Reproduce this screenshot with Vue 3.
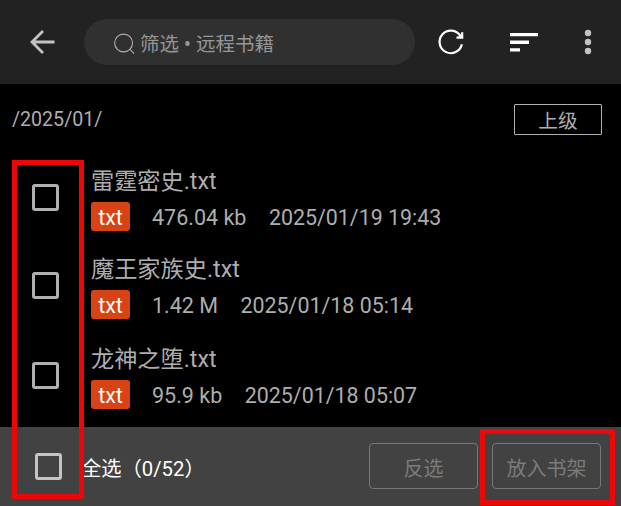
<script setup>
const books = [
  { name: '雷霆密史.txt', size: '476.04 kb', date: '2025/01/19 19:43' },
  { name: '魔王家族史.txt', size: '1.42 M', date: '2025/01/18 05:14' },
  { name: '龙神之堕.txt', size: '95.9 kb', date: '2025/01/18 05:07' },
]
</script>

<template>
  <div class="screen">
    <header class="toolbar">
      <svg class="back" width="26" height="26" viewBox="0 0 26 26">
        <path d="M25.5 13H3M14 2L3 13L14 24" fill="none" stroke="#c3c3c3" stroke-width="2.8" />
      </svg>
      <div class="search">
        <svg width="22" height="22" viewBox="0 0 22 22">
          <g fill="none" stroke="#b2b2b2" stroke-width="1.1">
            <circle cx="9.6" cy="10" r="8.9" />
            <path d="M15.8 16L20 20.6" />
          </g>
        </svg>
        <span>筛选 <b>•</b> 远程书籍</span>
      </div>
      <svg class="refresh" width="28" height="28" viewBox="0 0 28 28">
        <path d="M24.9 16.3A11.3 11.3 0 1 1 23.4 7.8" fill="none" stroke="#fff" stroke-width="2.2" />
        <path d="M25.2 4.2V9.7H19.5" fill="none" stroke="#fff" stroke-width="2.2" />
        <path d="M25 5V10H20Z" fill="#fff" />
      </svg>
      <svg class="sort" width="28" height="19" viewBox="0 0 28 19">
        <path d="M0 0H28V3.3H0ZM0 7.6H19V10.9H0ZM0 15.2H10V18.5H0Z" fill="#fff" />
      </svg>
      <svg class="more" width="8" height="26" viewBox="0 0 8 26">
        <g fill="#c3c3c3">
          <circle cx="4" cy="4" r="3.2" />
          <circle cx="4" cy="13" r="3.2" />
          <circle cx="4" cy="22" r="3.2" />
        </g>
      </svg>
    </header>

    <section class="location">
      <span class="path">/2025/01/</span>
      <button class="up">上级</button>
    </section>

    <main class="books">
      <article v-for="book in books" :key="book.name" class="book">
        <span class="check"></span>
        <div class="info">
          <h2>{{ book.name }}</h2>
          <div class="meta">
            <span class="tag">txt</span>
            <span class="size">{{ book.size }}</span>
            <span class="date">{{ book.date }}</span>
          </div>
        </div>
      </article>
    </main>

    <footer class="actions">
      <span class="check"></span>
      <span class="all">全选（0/52）</span>
      <button class="invert">反选</button>
      <button class="add">放入书架</button>
    </footer>

    <div class="mark mark-checks"></div>
    <div class="mark mark-add"></div>
  </div>
</template>

<style>
body {
  margin: 0;
  background: #000;
}
</style>

<style scoped>
.screen {
  position: relative;
  display: grid;
  grid-template-rows: 84px 70px 273px 79px;
  width: 621px;
  height: 506px;
  overflow: hidden;
  background: #000;
  color: #aeaeae;
  font-family: Roboto, "Noto Sans CJK SC", sans-serif;
  white-space: nowrap;
}
.screen * {
  box-sizing: border-box;
}
svg {
  display: block;
  flex: none;
}
button {
  padding: 0;
  background: transparent;
  font-family: inherit;
}
.toolbar {
  display: flex;
  align-items: center;
  padding-left: 28.5px;
  background: #222;
}
.search {
  display: flex;
  align-items: center;
  width: 331px;
  height: 46px;
  margin-left: 29.5px;
  padding-left: 30px;
  gap: 4px;
  border-radius: 23px;
  background: #303030;
  color: #969696;
  font-size: 19.5px;
  line-height: 28px;
}
.search span {
  padding-top: 5px;
}
.search b {
  font-family: "Noto Sans", sans-serif;
  font-weight: 400;
}
.search svg {
  margin-top: 3px;
}
.refresh {
  margin-left: 22px;
}
.sort {
  margin-left: 45px;
}
.more {
  margin-left: 46px;
}
.location {
  display: flex;
  align-items: center;
  justify-content: space-between;
  padding: 0 19px 0 12px;
}
.path {
  font-size: 19.6px;
}
.up {
  width: 88px;
  height: 31px;
  padding-top: 2px;
  border: 1px solid #b0b0b0;
  border-radius: 1px;
  color: #aeaeae;
  font-size: 19.7px;
  line-height: 29px;
}
.books {
  display: grid;
  grid-template-rows: 88px 90px 95px;
}
.book {
  display: flex;
}
.check {
  flex: none;
  width: 27px;
  height: 27px;
  border: 3px solid #b0b0b0;
  border-radius: 3px;
}
.book .check {
  margin: 30px 0 0 32px;
}
.info {
  margin-left: 32px;
}
h2 {
  height: 34px;
  margin: 10px 0 4px;
  font-size: 23.2px;
  font-weight: 400;
  line-height: 34px;
}
.meta {
  display: flex;
  align-items: center;
  height: 29px;
  font-size: 21.5px;
  line-height: 31px;
}
.tag {
  width: 39px;
  height: 29px;
  border-radius: 3px;
  background: #d84315;
  color: #fff;
  text-align: center;
}
.size {
  margin: 0 22.5px 0 22px;
}
.date {
  font-size: 21.4px;
}
.size,
.date {
  padding-top: 1px;
}
.actions {
  display: flex;
  align-items: center;
  padding-left: 34.5px;
  background: #424242;
}
.actions .check {
  border-color: #c4c4c4;
}
.all {
  width: 288px;
  margin-left: 19.5px;
  color: #fff;
  font-size: 20.3px;
}
.actions button {
  height: 46px;
  margin-bottom: 1px;
  border: 1px solid #777;
  border-radius: 4px;
  color: #7b7b7b;
  font-size: 20px;
  line-height: 50px;
}
.invert {
  width: 109px;
}
.add {
  width: 109px;
  margin-left: 14px;
}
.mark {
  position: absolute;
  border: 5px solid #ea0808;
}
.mark-checks {
  left: 12px;
  top: 160px;
  width: 72px;
  height: 339px;
}
.mark-add {
  left: 480px;
  top: 429px;
  width: 135px;
  height: 76px;
}
</style>
